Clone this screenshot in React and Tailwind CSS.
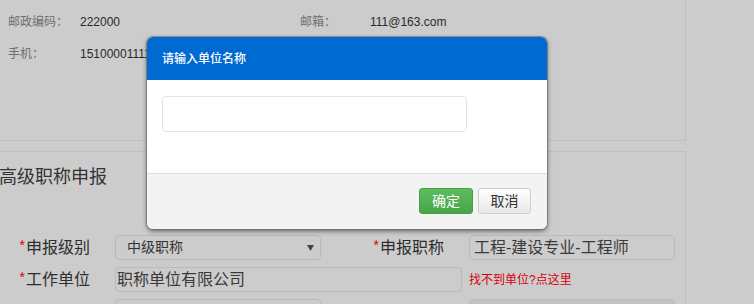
import React from "react";

const font = { fontFamily: '"Liberation Sans", "Noto Sans CJK SC", sans-serif' };

function Star() {
  return <span className="text-[#d6000c] text-[14px] relative top-[-3px] mr-[1px]">*</span>;
}

export default function App() {
  return (
    <div
      className="relative w-[754px] h-[304px] overflow-hidden bg-[#cccccc] flex flex-col"
      style={font}
    >
      {/* panel 1 */}
      <div className="w-[686px] h-[141px] shrink-0 border-r border-b border-[#bfbfbf] pt-[14px] flex flex-col gap-[16px] text-[12px] leading-[16px]">
        <div className="flex items-center">
          <span className="pl-[8px] w-[80px] text-[#6e6e6e]">邮政编码：</span>
          <span className="w-[220px] text-[#2a2a2a]">222000</span>
          <span className="w-[70px] text-[#6e6e6e]">邮箱：</span>
          <span className="text-[#2a2a2a]">111@163.com</span>
        </div>
        <div className="flex items-center">
          <span className="pl-[8px] w-[80px] text-[#6e6e6e]">手机：</span>
          <span className="w-[220px] text-[#2a2a2a]">15100001111</span>
        </div>
      </div>

      {/* panel 2 */}
      <div className="mt-[10px] w-[686px] flex-1 border-t border-r border-[#bfbfbf] pt-[13px]">
        <div className="ml-[-1px] text-[18px] leading-[24px] text-[#333333]">高级职称申报</div>

        <div className="mt-[46px] flex flex-col gap-[7px] text-[16px] text-[#2e2e2e]">
          <div className="flex items-center h-[25px]">
            <div className="w-[90px] text-right leading-[20px]"><Star />申报级别</div>
            <div className="ml-[25px] w-[206px] h-[25px] border border-[#bababa] rounded-[4px] flex items-center pl-[11px] pr-[6px] text-[14px] text-[#333333]">
              <span className="flex-1">中级职称</span>
              <svg width="7" height="6" viewBox="0 0 7 6"><path d="M0 0H7L3.5 6Z" fill="#444" /></svg>
            </div>
            <div className="w-[123px] text-right leading-[20px]"><Star />申报职称</div>
            <div className="ml-[25px] w-[206px] h-[25px] border border-[#bababa] rounded-[4px] flex items-center pl-[4px] text-[#3a3a3a]">
              工程-建设专业-工程师
            </div>
          </div>
          <div className="flex items-center h-[25px]">
            <div className="w-[90px] text-right leading-[20px]"><Star />工作单位</div>
            <div className="ml-[25px] w-[347px] h-[25px] border border-[#bababa] rounded-[4px] flex items-center pl-[1px] text-[#3a3a3a]">
              职称单位有限公司
            </div>
            <span className="ml-[7px] text-[12px] text-[#d8000c]">找不到单位?点这里</span>
          </div>
          <div className="flex items-center h-[25px]">
            <div className="w-[90px] text-right leading-[20px] relative top-[3px]"><Star />性别</div>
            <div className="ml-[25px] w-[206px] h-[25px] border border-[#bababa] rounded-[4px]"></div>
            <div className="w-[123px] text-right leading-[20px] relative top-[3px]"><Star />出生年月</div>
            <div className="ml-[25px] w-[206px] h-[25px] rounded-[4px] bg-[#c2c2c2] border border-[#bcbcbc]"></div>
          </div>
        </div>
      </div>

      {/* modal */}
      <div className="absolute left-[147px] top-[37px] w-[400px] h-[192px] rounded-[6px] overflow-hidden bg-white flex flex-col shadow-[0_2px_5px_rgba(0,0,0,0.55)] ring-1 ring-[#6a6a6a]/60">
        <div className="h-[43px] bg-[#006ad3] flex items-center pl-[15px] text-white text-[12px] font-medium">
          请输入单位名称
        </div>
        <div className="h-[93px] pt-[16px] pl-[15px]">
          <div className="w-[305px] h-[36px] border border-[#e4e4e4] rounded-[4px]"></div>
        </div>
        <div className="flex-1 border-t border-[#dddddd] bg-[#f3f3f3] flex items-start justify-end pt-[14px] pr-[16px] gap-[5px]">
          <button className="w-[54px] h-[26px] rounded-[3px] border border-[#45a045] bg-gradient-to-b from-[#5fbb5f] to-[#48a648] text-white text-[14px] leading-none">
            确定
          </button>
          <button className="w-[53px] h-[26px] rounded-[3px] border border-[#cfcfcf] bg-gradient-to-b from-white to-[#e8e8e8] text-[#333333] text-[14px] leading-none">
            取消
          </button>
        </div>
      </div>
    </div>
  );
}
